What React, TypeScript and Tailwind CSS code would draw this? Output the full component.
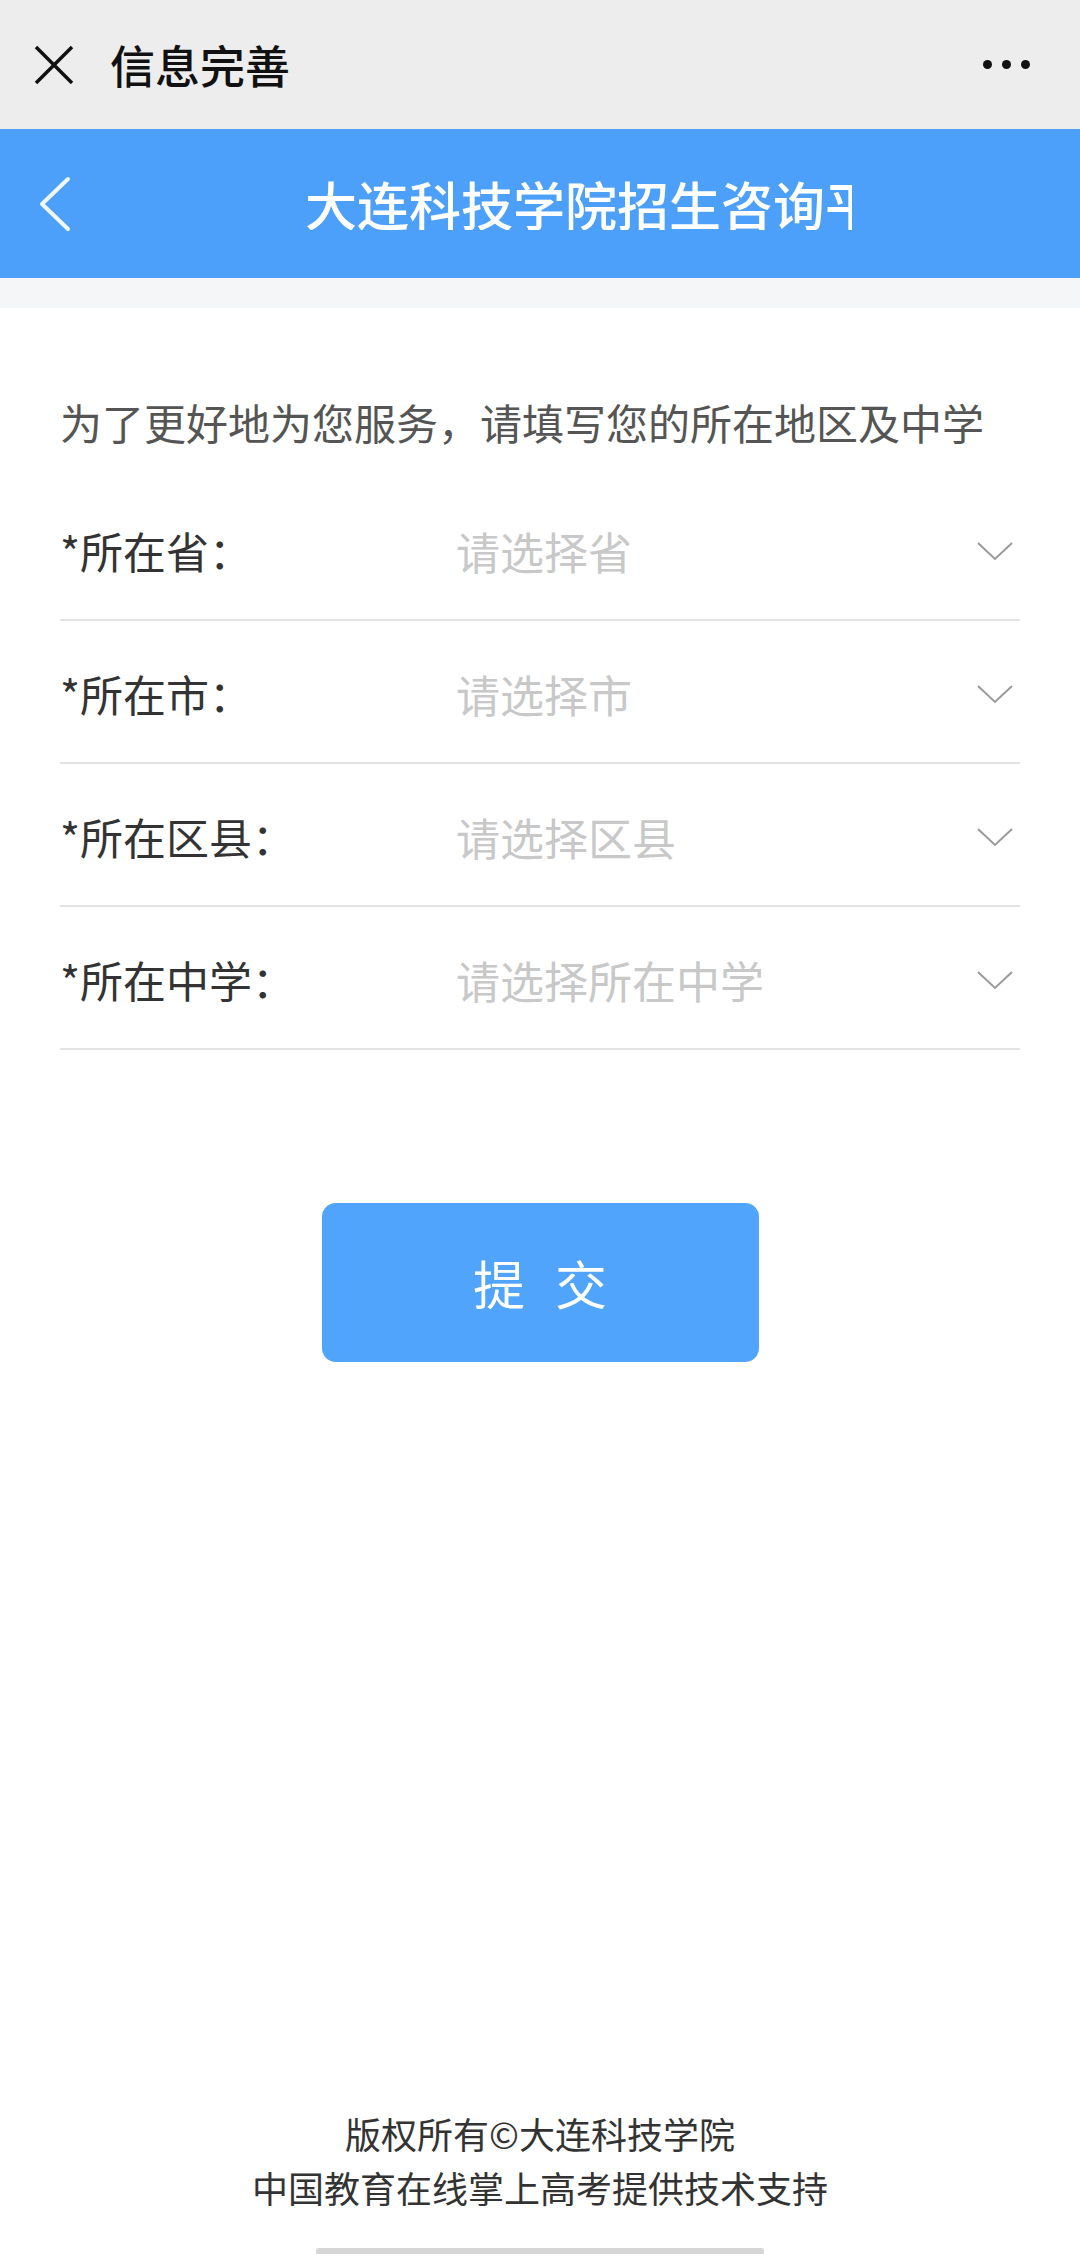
const fields = [
  { label: '*所在省：', placeholder: '请选择省' },
  { label: '*所在市：', placeholder: '请选择市' },
  { label: '*所在区县：', placeholder: '请选择区县' },
  { label: '*所在中学：', placeholder: '请选择所在中学' },
]

function Chevron() {
  return (
    <svg width="38" height="22" viewBox="0 0 38 22" fill="none">
      <path d="M2 3 L19 19 L36 3" stroke="#9a9a9a" strokeWidth="2" />
    </svg>
  )
}

export default function App() {
  return (
    <div
      className="flex h-[2254px] flex-col overflow-hidden bg-white"
      style={{ fontFamily: '"Noto Sans CJK SC", "Noto Sans", sans-serif' }}
    >
      {/* top bar */}
      <div className="flex h-[129px] shrink-0 items-center bg-[#ededed] pl-[34px] pr-[50px]">
        <svg width="40" height="40" viewBox="0 0 40 40" fill="none">
          <path d="M2 2 L38 38 M38 2 L2 38" stroke="#111" strokeWidth="3.5" />
        </svg>
        <span className="ml-[36px] text-[45px] font-medium leading-none text-[#111]">信息完善</span>
        <div className="ml-auto flex items-center gap-[10px]">
          <span className="h-[9px] w-[9px] rounded-full bg-[#111]" />
          <span className="h-[9px] w-[9px] rounded-full bg-[#111]" />
          <span className="h-[9px] w-[9px] rounded-full bg-[#111]" />
        </div>
      </div>

      {/* blue header */}
      <div className="flex h-[149px] shrink-0 items-center bg-[#4ca0fa] pl-[38px]">
        <svg width="34" height="56" viewBox="0 0 34 56" fill="none">
          <path d="M30 3 L4 28 L30 53" stroke="#eef6ff" strokeWidth="4" strokeLinecap="round" strokeLinejoin="round" />
        </svg>
        <div className="ml-[233px] w-[547px] overflow-hidden whitespace-nowrap text-[52px] font-medium leading-none text-white">
          大连科技学院招生咨询平台
        </div>
      </div>

      <div className="h-[30px] shrink-0 bg-[#f5f6f7]" />

      {/* form */}
      <div className="px-[60px] pt-[84px]">
        <p className="text-[42px] leading-[60px] text-[#555]">为了更好地为您服务，请填写您的所在地区及中学</p>
        <div className="mt-[26px]">
          {fields.map((f) => (
            <div key={f.label} className="flex h-[143px] items-center border-b-2 border-[#e3e3e3] pr-[6px] pt-[4px]">
              <span className="w-[396px] text-[43px] text-[#333]">{f.label}</span>
              <span className="text-[44px] text-[#c8c8c8]">{f.placeholder}</span>
              <span className="ml-auto">
                <Chevron />
              </span>
            </div>
          ))}
        </div>

        <button className="mx-auto mt-[153px] flex h-[159px] w-[437px] items-center justify-center gap-[30px] rounded-[14px] bg-[#50a4fb] text-[52px] text-white">
          <span>提</span>
          <span>交</span>
        </button>
      </div>

      {/* footer */}
      <div className="mt-auto flex flex-col items-center text-[36px] leading-[54px] text-[#333]">
        <p>版权所有©大连科技学院</p>
        <p>中国教育在线掌上高考提供技术支持</p>
        <div className="mt-[34px] h-[6px] w-[448px] rounded-t-[3px] bg-[#d6d6d6]" />
      </div>
    </div>
  )
}
